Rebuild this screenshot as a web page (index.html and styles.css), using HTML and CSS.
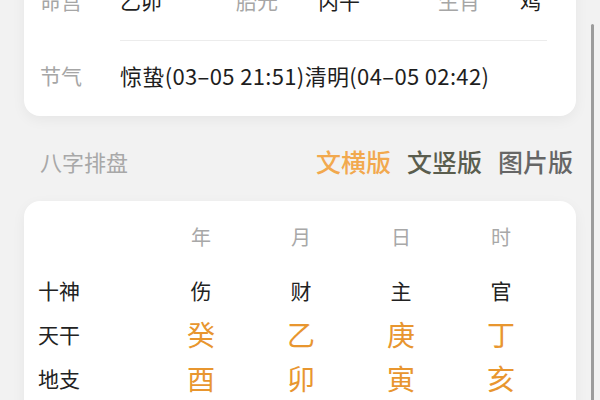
FILE: index.html
```html
<!DOCTYPE html>
<html lang="zh">
<head>
<meta charset="utf-8">
<link rel="stylesheet" href="styles.css">
</head>
<body>
<div class="page">
  <section class="card info">
    <div class="info-row top">
      <span class="lbl">命宫</span><span class="val">乙卯</span>
      <span class="lbl">胎元</span><span class="val">丙午</span>
      <span class="lbl">生肖</span><span class="val">鸡</span>
    </div>
    <div class="divider"></div>
    <div class="info-row jq">
      <span class="lbl">节气</span><span class="val date">惊蛰(03–05 21:51)清明(04–05 02:42)</span>
    </div>
  </section>

  <div class="section-head">
    <span class="section-title">八字排盘</span>
    <div class="tabs">
      <span class="tab active">文横版</span>
      <span class="tab tab2">文竖版</span>
      <span class="tab tab3">图片版</span>
    </div>
  </div>

  <section class="card pan">
    <div class="pan-row head">
      <span></span><span>年</span><span>月</span><span>日</span><span>时</span>
    </div>
    <div class="pan-row">
      <span class="rl">十神</span><span>伤</span><span>财</span><span>主</span><span>官</span>
    </div>
    <div class="pan-row big">
      <span class="rl">天干</span><span>癸</span><span>乙</span><span>庚</span><span>丁</span>
    </div>
    <div class="pan-row big">
      <span class="rl">地支</span><span>酉</span><span>卯</span><span>寅</span><span>亥</span>
    </div>
  </section>
</div>
<div class="scrollbar"></div>
</body>
</html>
```

FILE: styles.css
```css
html, body {
  margin: 0;
  padding: 0;
  background: #f2f2f2;
  height: 400px;
  overflow: hidden;
  font-family: "Noto Sans CJK SC", "Noto Sans", sans-serif;
  color: #1e1e1e;
}
.page {
  padding: 0 24px;
}
.card {
  background: #fff;
  border-radius: 16px;
  box-shadow: 0 4px 14px rgba(0, 0, 0, 0.05);
}
.info {
  margin-top: -56px;
  padding: 16px 0 7px 16px;
}
.info-row {
  display: grid;
  grid-template-columns: 80px 116px 82px 120px 82px 1fr;
  align-items: center;
  font-size: 21px;
}
.info-row.top {
  height: 80px;
}
.info-row.jq {
  grid-template-columns: 80px 1fr;
  height: 68px;
}
.lbl {
  color: #a6a6a6;
}
.val {
  color: #1e1e1e;
}
.date {
  font-size: 22px;
  letter-spacing: 0.35px;
}
.divider {
  height: 1px;
  background: #ececec;
  margin: 0 29px 0 80px;
}
.section-head {
  height: 85px;
  box-sizing: border-box;
  padding: 4px 3px 0 16px;
  display: flex;
  align-items: center;
  justify-content: space-between;
}
.section-title {
  font-size: 22px;
  color: #a8a8a8;
}
.tabs {
  display: flex;
  gap: 16px;
  font-size: 25px;
  font-weight: 500;
}
.tab.active { color: #f2a94e; }
.tab2 { color: #5a5d4e; }
.tab3 { color: #666; }
.pan {
  padding: 15px 0 0 14px;
  border-radius: 16px 16px 0 0;
  min-height: 220px;
}
.pan-row {
  display: grid;
  grid-template-columns: 113px 100px 100px 100px 100px;
  align-items: center;
  height: 44px;
  font-size: 21px;
  color: #222;
}
.pan-row span {
  text-align: center;
}
.pan-row span.rl {
  text-align: left;
}
.pan-row.head {
  height: 40px;
  margin-bottom: 12px;
  color: #a8a8a8;
  font-size: 20px;
}
.pan-row.big span {
  color: #e8962f;
  font-size: 28px;
}
.pan-row.big span.rl {
  color: #222;
  font-size: 21px;
}
.scrollbar {
  position: absolute;
  left: 591px;
  top: 24px;
  width: 3px;
  height: 380px;
  background: #9c9c9c;
  border-radius: 2px;
}
```
